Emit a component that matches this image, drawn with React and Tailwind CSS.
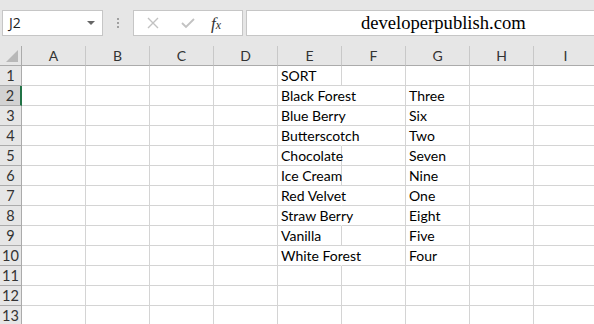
import { useState } from 'react';

const columns = ['A', 'B', 'C', 'D', 'E', 'F', 'G', 'H', 'I'];

const flavours = [
    { e: 'SORT', g: '' },
    { e: 'Black Forest', g: 'Three', spill: true },
    { e: 'Blue Berry', g: 'Six', spill: true },
    { e: 'Butterscotch', g: 'Two', spill: true },
    { e: 'Chocolate', g: 'Seven' },
    { e: 'Ice Cream', g: 'Nine' },
    { e: 'Red Velvet', g: 'One', spill: true },
    { e: 'Straw Berry', g: 'Eight', spill: true },
    { e: 'Vanilla', g: 'Five' },
    { e: 'White Forest', g: 'Four', spill: true },
    { e: '', g: '' },
    { e: '', g: '' },
    { e: '', g: '' },
];

const cellFont = { fontFamily: 'Lato, "Open Sans", sans-serif' };

const FormulaBar = () => (
    <div className="h-[46px] flex items-start pt-[10px] pl-[2px] gap-0">
        {/* Name box */}
        <div className="w-[101px] h-[26px] bg-white border border-[#c6c6c6] flex items-center justify-between pl-[6px] pr-[7px]">
            <span className="text-[14px] text-[#222] font-['Open_Sans',sans-serif] leading-none">J2</span>
            <span className="w-0 h-0 border-l-[4px] border-r-[4px] border-t-[4px] border-l-transparent border-r-transparent border-t-[#666]"></span>
        </div>
        {/* Grip */}
        <div className="w-[30px] h-[26px] flex flex-col items-center justify-center gap-[2px]">
            <span className="w-[2px] h-[2px] bg-[#a0a0a0]"></span>
            <span className="w-[2px] h-[2px] bg-[#a0a0a0]"></span>
            <span className="w-[2px] h-[2px] bg-[#a0a0a0]"></span>
        </div>
        {/* Cancel / enter / fx */}
        <div className="w-[110px] h-[26px] bg-white border border-[#c6c6c6] flex items-center">
            <svg className="ml-[13px]" width="12" height="12" viewBox="0 0 12 12">
                <path d="M1 1 L11 11 M11 1 L1 11" stroke="#c2c2c2" strokeWidth="1.4" fill="none" />
            </svg>
            <svg className="ml-[22px]" width="14" height="12" viewBox="0 0 14 12">
                <path d="M1 6 L5 10 L13 2" stroke="#c2c2c2" strokeWidth="1.8" fill="none" />
            </svg>
            <span className="ml-[16px] text-[17px] italic text-[#333] font-['Liberation_Serif',serif] leading-none">
                f<span className="text-[12px]">x</span>
            </span>
        </div>
        {/* Formula input */}
        <div className="ml-[3px] flex-1 h-[26px] bg-white border border-[#c6c6c6] border-r-0 pl-[114px] flex items-center">
            <span className="text-[18.6px] text-black font-['Liberation_Serif',serif] leading-none pt-[1px]">
                developerpublish.com
            </span>
        </div>
    </div>
);

const HeaderRow = () => (
    <div className="flex h-[20px]">
        <div className="w-[22px] shrink-0 h-[20px] border-r border-b border-[#ababab] relative bg-[#e6e6e6]">
            <span
                className="absolute right-[3px] bottom-[3px] w-0 h-0"
                style={{ borderRight: '0', borderBottom: '12px solid #b8b8b8', borderLeft: '12px solid transparent', borderTop: '0' }}
            ></span>
        </div>
        {columns.map((col) => (
            <div
                key={col}
                className="w-[64px] shrink-0 h-[20px] border-r border-b border-r-[#c8c8c8] border-b-[#ababab] flex items-center justify-center text-[14px] text-[#333] leading-none bg-[#e6e6e6]"
                style={cellFont}
            >
                {col}
            </div>
        ))}
    </div>
);

const App = () => {
    const [active] = useState(2);

    return (
        <div className="w-[594px] h-[324px] overflow-hidden bg-[#e6e6e6] select-none">
            <FormulaBar />
            <HeaderRow />
            <div className="bg-white">
                {flavours.map((row, idx) => {
                    const num = idx + 1;
                    const selected = num === active;
                    return (
                        <div key={num} className="flex h-[20px]">
                            <div
                                className={`w-[22px] shrink-0 h-[20px] border-b border-[#ababab] flex items-end justify-center pb-[2px] text-[14.5px] text-[#333] leading-none ${selected ? 'bg-[#d2d2d2] border-r-2 border-r-[#217346]' : 'bg-[#e6e6e6] border-r'}`}
                                style={cellFont}
                            >
                                {num}
                            </div>
                            {columns.map((col) => {
                                const value = col === 'E' ? row.e : col === 'G' ? row.g : '';
                                const hideRight = col === 'E' && row.spill;
                                return (
                                    <div
                                        key={col}
                                        className={`w-[64px] shrink-0 h-[20px] border-b border-[#d4d4d4] flex items-end pl-[3px] pb-[2px] text-[14px] text-black leading-none whitespace-nowrap overflow-visible ${hideRight ? 'border-r border-r-white' : 'border-r'}`}
                                        style={cellFont}
                                    >
                                        {value}
                                    </div>
                                );
                            })}
                        </div>
                    );
                })}
            </div>
        </div>
    );
};

export default App;
